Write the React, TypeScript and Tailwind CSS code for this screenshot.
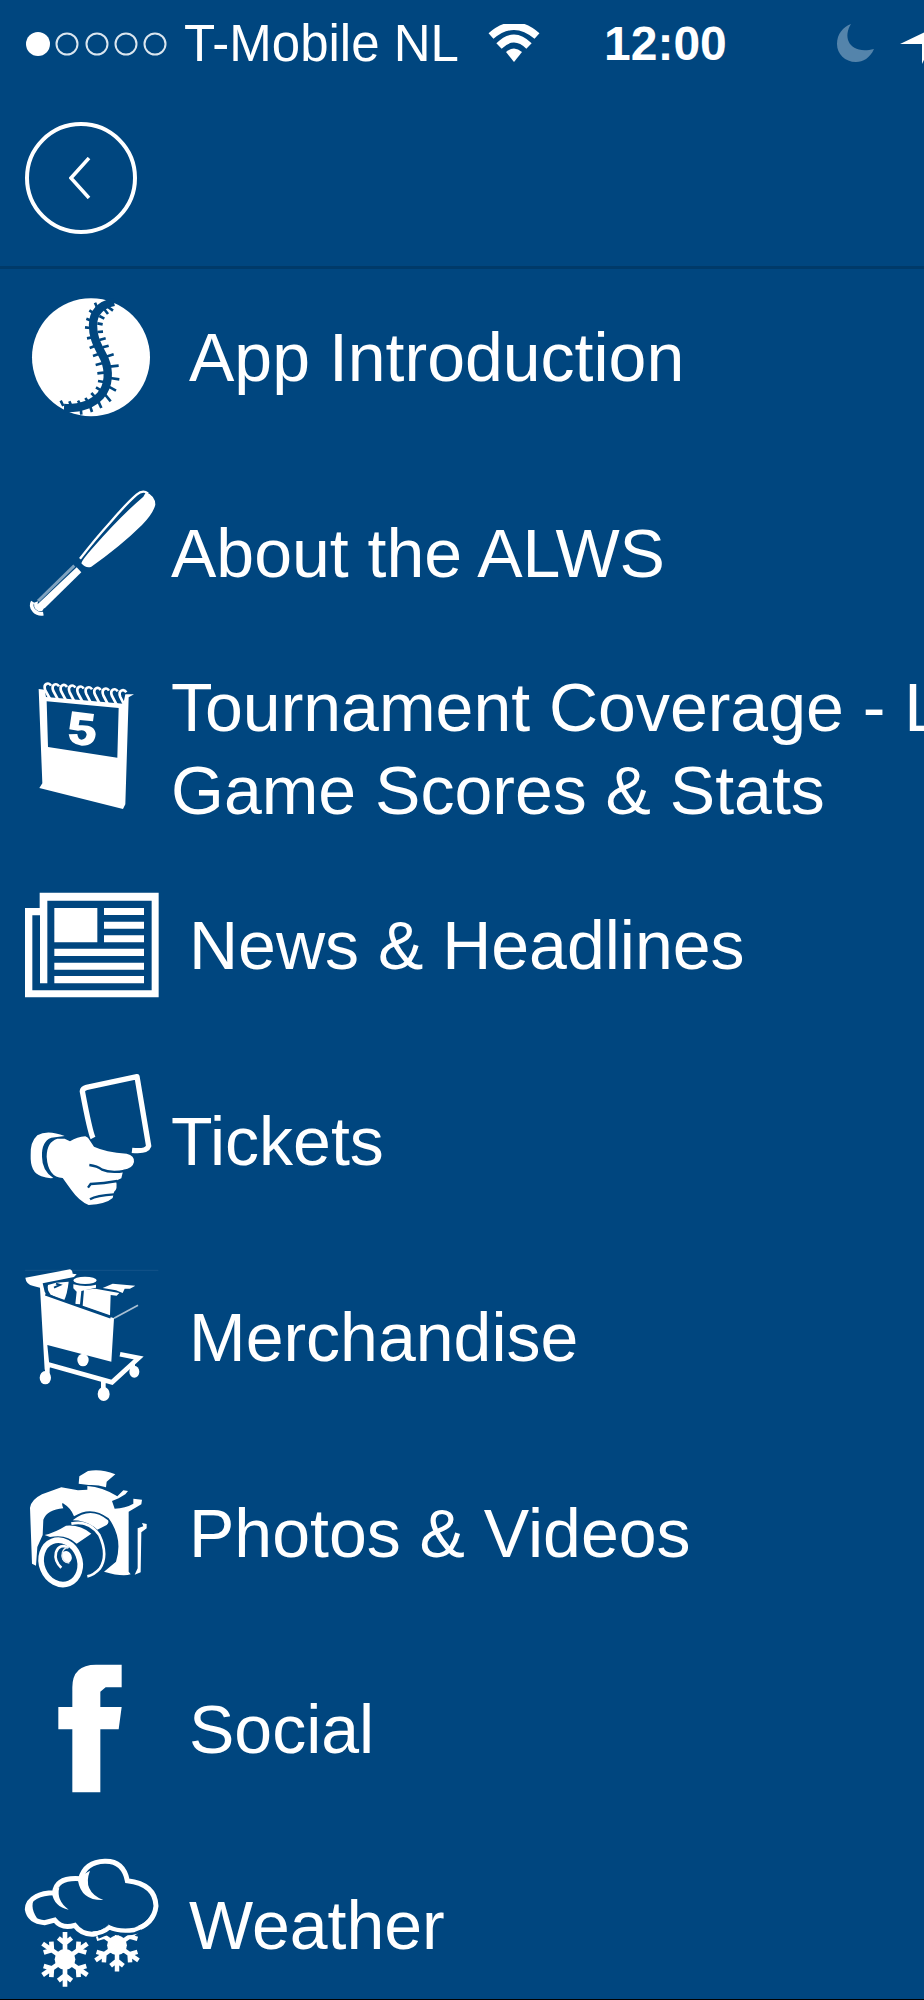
import React from "react";

const BG = "#00467f";

function Icon({ viewBox, children }: { viewBox: string; children: React.ReactNode }) {
  return (
    <svg
      viewBox={viewBox}
      aria-hidden="true"
      className="h-[134px] w-[134px] shrink-0 overflow-visible fill-white"
    >
      {children}
    </svg>
  );
}

const Baseball = () => (
  <Icon viewBox="45 30 402 402">
    <circle cx="243" cy="232" r="177" />
    <g fill="none" stroke={BG}>
      <path
        strokeWidth="25"
        d="M312 66 C274 74 250 96 249 134 C248 178 268 204 284 238 C298 272 298 316 272 346 C250 370 212 386 162 384"
      />
      <path
        strokeWidth="8"
        d="M262 84l-7-16M252 100l-14-9M244 122l-15-6M242 144l-17-2M246 172l-15 3M254 198l-15 6M266 222l-17 6M276 250l-19 5M282 278l-20 2M282 306l-18-3M274 332l-16-10M256 352l-12-13M236 368l-10-14M212 376l-8-14M184 378l-6-14M160 378l-8-16"
      />
      <path
        strokeWidth="8"
        d="M290 78l19 14M280 84l14 18M268 108l15 8M262 130l16 3M262 156l17-1M268 180l19-5M278 202l18-5M288 230l23-7M298 260l28-3M300 294l28 4M296 320l22 12M284 342l18 22M264 362l10 22M240 378l6 18M212 384l2 20"
      />
    </g>
  </Icon>
);

const Bat = () => (
  <Icon viewBox="45 48 402 402">
    <path d="M408 66 Q436 78 436 104 Q430 130 396 165 Q330 230 244 290 Q228 296 214 280 Q216 270 250 232 Q330 140 400 80 Z" />
    <path
      fill="none"
      stroke="white"
      strokeWidth="7"
      d="M210 266 Q258 204 300 158 Q350 100 380 74 Q398 58 414 70"
    />
    <path d="M200 292l14 15L104 415l-26-8z" />
    <path fill="none" stroke="#7fa2bf" strokeWidth="9" d="M193 287L84 393" />
    <path d="M84 394 Q78 410 104 412 L96 424 Q70 424 72 398 Z" />
    <path fill="none" stroke="white" strokeWidth="11" d="M68 395 Q60 408 72 422 Q84 434 100 431" />
  </Icon>
);

const Calendar = () => (
  <Icon viewBox="45 51 402 402">
    <path
      fillRule="evenodd"
      d="M86 72 L104 74 L108 96 L340 116 L346 88 L372 88 L356 97 L346 418 L339 432 L88 369 L97 355 Z M110 109 L114 246 L322 278 L326 129 Z"
    />
    <path
      fill="none"
      stroke="white"
      strokeWidth="8"
      d="M120 102l-14-26c-8-20 10-26 17-14M144 104l-14-26c-8-20 10-26 17-14M168 106l-14-26c-8-20 10-26 17-14M193 109l-14-27c-8-20 10-26 17-14M218 111l-14-26c-8-20 10-26 17-14M243 114l-14-27c-8-20 10-26 17-14M269 116l-14-27c-8-20 10-26 17-14M294 118l-14-27c-8-20 10-26 17-14M321 121l-15-28c-8-20 10-26 17-14M344 122l-13-26c-8-20 10-26 18-14"
    />
    <path d="M186 139 L252 147 L249 169 L209 165 L206 181 Q256 177 257 208 Q254 243 215 242 Q180 239 176 208 L202 207 Q204 224 215 224 Q229 223 230 208 Q226 191 204 197 L178 193 Z" />
  </Icon>
);

const News = () => (
  <Icon viewBox="45 24 402 402">
    <path
      fillRule="evenodd"
      d="M89 68H446V382H45V114H89Z M112 92V340H90V136H67V361H425V92Z"
    />
    <path d="M133 114H262V217H133ZM282 114H402V135H282ZM282 155H402V176H282ZM282 196H402V217H282ZM133 236H402V258H133ZM133 278H402V299H133ZM133 318H402V340H133Z" />
  </Icon>
);

const Tickets = () => (
  <Icon viewBox="45 42 402 402">
    <path
      fill="none"
      stroke="white"
      strokeWidth="16"
      strokeLinejoin="round"
      d="M249 234 Q240 216 217 94 Q218 85 230 82 L381 50 L416 258 Q410 276 366 271"
    />
    <path d="M164 228 Q112 208 82 226 Q60 246 62 286 Q60 338 94 349 Q112 356 130 354 Q96 332 96 290 Q94 244 124 233 Z" />
    <path d="M110 290 Q110 246 142 236 L164 236 L180 244 Q202 230 226 229 L234 233 L252 260 Q286 276 350 281 Q374 286 372 306 Q368 326 340 329 L334 355 L318 362 Q324 386 312 396 L308 414 Q288 432 236 435 Q208 424 184 390 L158 354 Q114 352 110 290 Z" />
    <g fill="none" stroke={BG} strokeWidth="7">
      <path d="M238 315 Q262 318 276 329 Q300 340 344 333" />
      <path d="M234 383 L242 372 Q282 370 322 363" />
      <path d="M240 418 Q260 406 312 403" />
    </g>
  </Icon>
);

const Cart = () => (
  <Icon viewBox="45 45 402 402">
    <path fill="none" stroke="#1c5a8e" strokeWidth="2" d="M45 46H445" />
    <path d="M46 68 L180 43 Q188 46 188 56 L200 58 L192 66 L98 85 L104 110 Q106 118 118 124 L312 190 L304 320 L112 270 L119 340 L104 344 L90 98 L70 93 Q48 88 46 68 Z" />
    <path d="M114 90 L138 83 L176 80 Q172 116 162 137 L122 119 Q110 104 114 90 Z" />
    <path fill="none" stroke={BG} strokeWidth="6" d="M132 98 L150 90 L138 86" />
    <ellipse cx="225" cy="76" rx="35" ry="11" />
    <path d="M190 88 Q226 98 258 89 L258 98 L214 108 L210 148 L196 147 L200 110 L190 100 Z" />
    <path d="M222 104 L256 101 L328 114 L320 122 L302 120 L300 181 L218 152 Z" />
    <path d="M278 99 L308 86 L376 92 L360 101 L344 101 L338 114 L318 106 Z" />
    <path fill="none" stroke={BG} strokeWidth="7" d="M106 118 L210 155 L302 187" />
    <path fill="none" stroke="#a9c0d4" strokeWidth="5" d="M312 190 L384 151" />
    <path
      fill="none"
      stroke="white"
      strokeWidth="14"
      d="M110 327 L306 382 L386 309 L330 298 M112 325 V360 M280 380 V410 M368 324 V350"
    />
    <ellipse cx="106" cy="368" rx="17" ry="20" />
    <ellipse cx="219" cy="315" rx="17" ry="19" />
    <ellipse cx="281" cy="417" rx="18" ry="21" />
    <ellipse cx="373" cy="350" rx="15" ry="18" />
  </Icon>
);

const Camera = () => (
  <Icon viewBox="45 33 402 402">
    <path d="M208 64 L234 48 Q272 40 316 58 L290 80 L288 97 Q260 88 236 90 L206 86 Z" />
    <path d="M232 93 Q278 96 322 124 L340 106 L354 108 L346 118 L326 130 L306 138 L314 161 Q346 160 370 146 L370 131 L396 134 L394 148 L356 170 L356 350 L362 358 Q336 366 282 350 L318 320 Q340 250 296 190 Q244 150 192 184 Q184 160 158 144 Q154 146 160 160 Q112 164 100 194 L98 240 L82 276 L78 332 L66 326 L60 158 Q64 134 96 118 L154 97 L204 106 L232 104 Z" />
    <path
      fill="none"
      stroke="white"
      strokeWidth="8"
      d="M184 206 Q236 194 268 240 Q296 300 270 340 Q252 360 232 364"
    />
    <path d="M104 240 Q136 232 168 212 Q210 208 244 236 L200 266 Q170 236 120 246 Z" />
    <path d="M188 196 Q242 152 294 196 Q298 204 290 210 L262 224 Q232 196 188 196 Z" />
    <ellipse
      cx="152"
      cy="322"
      rx="57"
      ry="68"
      fill={BG}
      stroke="white"
      strokeWidth="17"
      transform="rotate(-22 152 322)"
    />
    <path
      fill="none"
      stroke="white"
      strokeWidth="8"
      d="M176 278 Q148 264 138 292 Q132 318 154 338"
    />
    <ellipse cx="170" cy="306" rx="15" ry="18" transform="rotate(-20 170 306)" />
    <path
      fill="none"
      stroke="#dfe9f1"
      strokeWidth="4"
      d="M176 276 Q156 280 156 302 Q158 322 178 324"
    />
    <path d="M383 220 L400 214 L396 204 L410 207 L410 220 L394 232 L392 352 L374 359 L383 340 Z" />
  </Icon>
);

const Facebook = () => (
  <Icon viewBox="45 36 402 402">
    <path d="M187 427V238H145V171H187V112Q187 44 258 44H335V112H287L271 125V171H335L326 238H271V427Z" />
  </Icon>
);

const Flake = ({ x, y, s }: { x: number; y: number; s: number }) => (
  <g transform={`translate(${x} ${y}) scale(${s})`}>
    <circle r="31" />
    {[0, 55, 125, 180, 235, 305].map((a) => (
      <path
        key={a}
        transform={`rotate(${a})`}
        fill="none"
        stroke="white"
        strokeWidth="14"
        d="M0 0V-82M-20 -64L0 -48L20 -64"
      />
    ))}
  </g>
);

const Weather = () => (
  <Icon viewBox="45 54 402 402">
    <Flake x={165} y={358} s={1} />
    <Flake x={321} y={316} s={0.96} />
    <path
      fill={BG}
      stroke="white"
      strokeWidth="15"
      d="M134 158 Q98 158 78 170 Q52 184 52 208 Q58 244 104 248 L134 240 Q156 268 194 256 Q216 286 254 282 Q278 280 298 262 Q326 276 372 270 Q432 252 438 198 Q436 132 352 122 Q340 62 284 64 Q226 66 212 116 Q138 110 134 158 Z"
    />
    <path fill={BG} d="M266 296 Q282 288 302 283 Q350 292 396 278 L392 260 L300 250 L262 284Z" />
    <path
      fill="none"
      stroke="white"
      strokeWidth="13"
      d="M248 281 Q278 280 298 262 Q326 276 372 270 Q414 258 430 226"
    />
    <path d="M206 112 L240 92 Q216 154 280 180 Q214 182 204 122 Z" />
    <path d="M126 160 L148 142 Q138 182 176 209 Q132 200 126 160 Z" />
    <path d="M46 206 Q48 178 80 164 Q54 196 82 236 Q46 226 46 206 Z" />
  </Icon>
);

type Item = { label: React.ReactNode; icon: React.ReactNode; tight?: boolean };

const items: Item[] = [
  { label: "App Introduction", icon: <Baseball /> },
  { label: "About the ALWS", icon: <Bat />, tight: true },
  {
    label: (
      <>
        Tournament Coverage - L
        <br />
        Game Scores &amp; Stats
      </>
    ),
    icon: <Calendar />,
    tight: true,
  },
  { label: "News & Headlines", icon: <News /> },
  { label: "Tickets", icon: <Tickets />, tight: true },
  { label: "Merchandise", icon: <Cart /> },
  { label: "Photos & Videos", icon: <Camera /> },
  { label: "Social", icon: <Facebook /> },
  { label: "Weather", icon: <Weather /> },
];

function StatusBar() {
  return (
    <div className="flex h-[88px] items-center overflow-hidden pl-6 whitespace-nowrap text-white">
      <svg viewBox="0 0 144 28" aria-hidden="true" className="h-7 w-36 shrink-0">
        <circle cx="14" cy="14" r="12" fill="white" />
        {[43, 73, 102, 131].map((x) => (
          <circle key={x} cx={x} cy="14" r="10.5" fill="none" stroke="#dbe6ef" strokeWidth="2" />
        ))}
      </svg>
      <span className="ml-4 w-72 shrink-0 text-[51px]">T-Mobile NL</span>
      <svg viewBox="0 0 52 40" aria-hidden="true" className="ml-4 h-10 w-[52px] shrink-0">
        <g fill="none" stroke="white" strokeWidth="7.5">
          <path d="M3 12 Q26 -8 49 12" />
          <path d="M11 22 Q26 7 41 22" />
        </g>
        <path fill="white" d="M26 38L18 28Q26 21 34 28Z" />
      </svg>
      <span className="ml-16 w-[124px] shrink-0 text-[48px] font-bold">12:00</span>
      <svg viewBox="0 0 40 40" aria-hidden="true" className="ml-[108px] h-10 w-10 shrink-0">
        <path fill="#5484ab" d="M15 0C6 14 14 31 38 25C34 34 27 38 20 38C9 38 1 30 1 20C1 10 7 3 15 0Z" />
      </svg>
      <svg viewBox="0 0 40 40" aria-hidden="true" className="ml-6 h-10 w-10 shrink-0">
        <path fill="white" d="M0 20L40 1L22 40V20Z" />
      </svg>
    </div>
  );
}

export default function App() {
  return (
    <div className="flex h-screen flex-col overflow-hidden border-b border-black bg-[#00467f] font-['Liberation_Sans',Arial,sans-serif] text-white">
      <header className="shrink-0 border-b-3 border-[#003a69] pb-8">
        <StatusBar />
        <div className="px-[25px] pt-[34px]">
          <button
            type="button"
            aria-label="Back"
            className="flex h-28 w-28 items-center justify-center rounded-full border-4 border-white"
          >
            <svg viewBox="0 0 24 42" aria-hidden="true" className="h-[42px] w-6">
              <path fill="none" stroke="white" strokeWidth="3.5" d="M20 1L2 21L20 41" />
            </svg>
          </button>
        </div>
      </header>
      <nav className="-mt-2.5 shrink-0">
        <ul>
          {items.map((item, i) => (
            <li key={i}>
              <a
                href="#"
                className="flex h-[196px] items-center pl-[25px] text-[68px] leading-[83px] whitespace-nowrap"
              >
                {item.icon}
                <span className={item.tight ? "ml-3" : "ml-[30px]"}>{item.label}</span>
              </a>
            </li>
          ))}
        </ul>
      </nav>
    </div>
  );
}
